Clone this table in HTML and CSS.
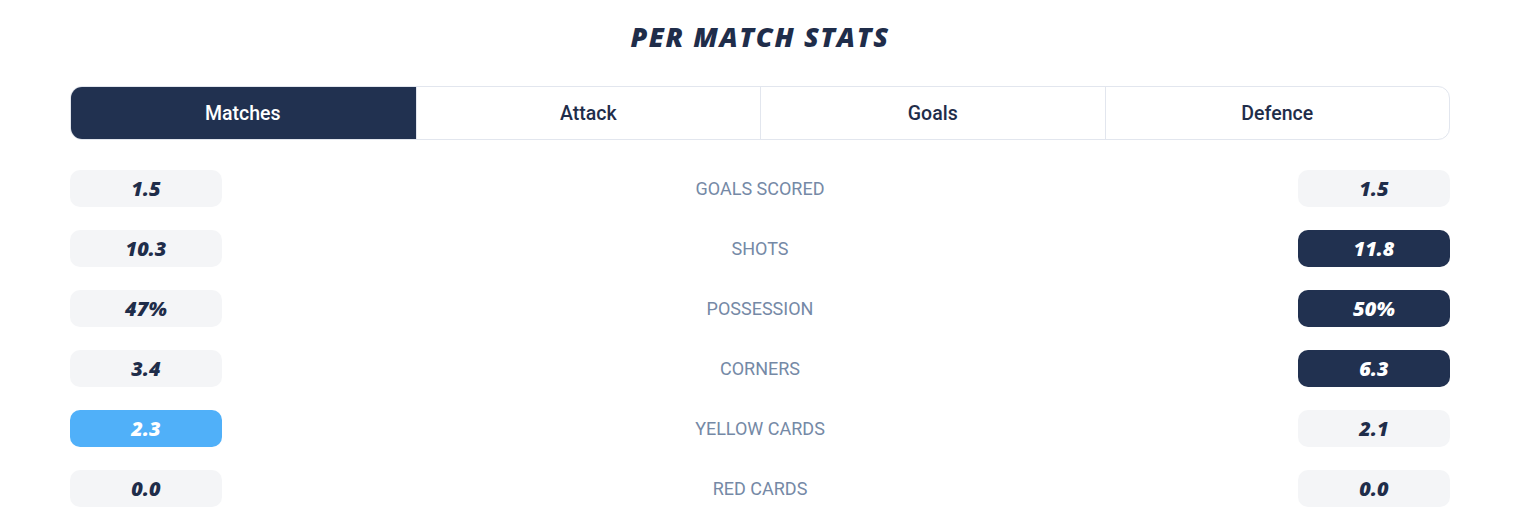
FILE: index.html
```html
<!DOCTYPE html>
<html>
<head>
<meta charset="utf-8">
<link rel="stylesheet" href="styles.css">
</head>
<body>
<div class="wrap">
  <h2 class="title">PER MATCH STATS</h2>
  <div class="tabs">
    <div class="tab active">Matches</div>
    <div class="tab">Attack</div>
    <div class="tab">Goals</div>
    <div class="tab">Defence</div>
  </div>
  <div class="rows">
    <div class="row"><div class="val">1.5</div><div class="label">GOALS SCORED</div><div class="val">1.5</div></div>
    <div class="row"><div class="val">10.3</div><div class="label">SHOTS</div><div class="val dark">11.8</div></div>
    <div class="row"><div class="val">47%</div><div class="label">POSSESSION</div><div class="val dark">50%</div></div>
    <div class="row"><div class="val">3.4</div><div class="label">CORNERS</div><div class="val dark">6.3</div></div>
    <div class="row"><div class="val blue">2.3</div><div class="label">YELLOW CARDS</div><div class="val">2.1</div></div>
    <div class="row"><div class="val">0.0</div><div class="label">RED CARDS</div><div class="val">0.0</div></div>
  </div>
</div>
</body>
</html>
```
FILE: styles.css
```css
* { box-sizing: border-box; }
body {
  margin: 0;
  background: #ffffff;
  font-family: Roboto, "Liberation Sans", sans-serif;
  color: #1f2d4a;
}
.wrap {
  width: 1380px;
  margin-left: 70px;
}
.title {
  margin: 21px 0 0;
  height: 32px;
  line-height: 32px;
  text-align: center;
  font-family: "Open Sans", sans-serif;
  font-style: italic;
  font-weight: 800;
  font-size: 27px;
  color: #1f2d4a;
  letter-spacing: 1.6px;
}
.tabs {
  margin-top: 33px;
  display: grid;
  grid-template-columns: repeat(4, 1fr);
  height: 54px;
  border: 1px solid #e2e6ee;
  border-radius: 12px;
  overflow: hidden;
}
.tab {
  display: flex;
  align-items: center;
  justify-content: center;
  font-size: 19.5px;
  font-weight: 500;
  color: #1f2d4a;
  border-left: 1px solid #e2e6ee;
}
.tab:first-child { border-left: none; }
.tab.active {
  background: #213150;
  color: #ffffff;
  margin: -1px 0 -1px -1px;
}
.rows {
  margin-top: 30px;
  display: flex;
  flex-direction: column;
  gap: 23px;
}
.row {
  display: grid;
  grid-template-columns: 152px 1fr 152px;
  align-items: center;
  height: 37px;
}
.val {
  height: 37px;
  border-radius: 10px;
  background: #f4f5f7;
  display: flex;
  align-items: center;
  justify-content: center;
  font-family: "Open Sans", sans-serif;
  font-style: italic;
  font-weight: 800;
  font-size: 20px;
  color: #1f2d4a;
  letter-spacing: 0px;
}
.val.dark { background: #213150; color: #ffffff; }
.val.blue { background: #50b0f9; color: #ffffff; }
.label {
  text-align: center;
  font-size: 18px;
  color: #7589a6;
}
```
